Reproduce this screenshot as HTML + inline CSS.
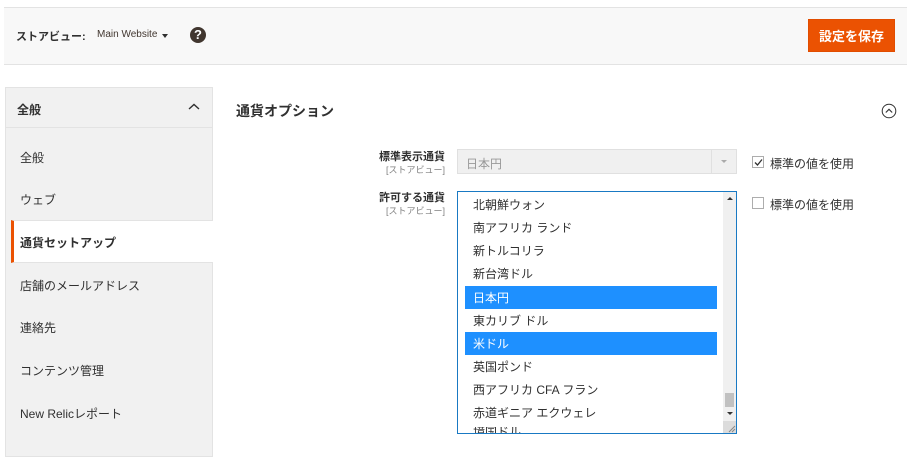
<!DOCTYPE html>
<html><head><meta charset="utf-8"><style>
*{box-sizing:border-box;margin:0;padding:0}
body{width:911px;height:447px;overflow:hidden;background:#fff;font-family:"Liberation Sans","Noto Sans CJK JP",sans-serif;color:#303030;position:relative}
.a{position:absolute}
.topbar{left:4px;top:7px;width:903px;height:58px;background:#f8f8f8;border-top:1px solid #e3e3e3;border-bottom:1px solid #e3e3e3}
.btn{left:808px;top:19px;width:87px;height:33px;background:#eb5202;color:#fff;font-weight:bold;font-size:13px;text-align:center;line-height:33px;border:1px solid #e14d00}
.side{left:5px;top:87px;width:208px;height:370px;background:#f1f1f1;border:1px solid #e3e3e3}
.sh{left:5px;top:87px;width:208px;height:41px;border:1px solid #e3e3e3;font-size:12px;font-weight:bold;padding:13px 0 0 11px}
.it{left:20px;font-size:12px;color:#303030}
.act{left:11px;top:220px;width:202px;height:43px;background:#fff;border-left:3px solid #eb5202;border-top:1px solid #e3e3e3;border-bottom:1px solid #e3e3e3}
.lbl{right:466px;text-align:right;font-size:11px;font-weight:bold;line-height:13px}
.lbl span{display:block;font-weight:normal;font-size:9px;color:#808080}
.opt{left:473px;font-size:12px;color:#303030;line-height:23px}
.hl{left:465px;width:252px;height:23px;background:#1e90ff}
.cb{width:12px;height:12px;border:1px solid #adadad;background:#fff}
.ct{left:770px;font-size:12px}
</style></head><body>
<div class="a topbar"></div>
<div class="a" style="left:16px;top:28px;font-size:11px;font-weight:bold">ストアビュー:</div>
<div class="a" style="left:97px;top:29px;font-size:10px;color:#41362f">Main Website</div>
<div class="a" style="left:162px;top:34px;width:0;height:0;border-left:3px solid transparent;border-right:3px solid transparent;border-top:4px solid #303030"></div>
<div class="a" style="left:190px;top:27px;width:16px;height:16px;border-radius:50%;background:#41362f;color:#fff;font-size:13px;font-weight:bold;text-align:center;line-height:16px">?</div>
<div class="a btn">設定を保存</div>

<div class="a side"></div>
<div class="a sh">全般</div>
<svg class="a" style="left:188px;top:103px" width="12" height="8"><path d="M1 6 L6 1.5 L11 6" stroke="#303030" stroke-width="1.4" fill="none"/></svg>
<div class="a it" style="top:149px">全般</div>
<div class="a it" style="top:191px">ウェブ</div>
<div class="a act"></div>
<div class="a it" style="top:234px;font-weight:bold">通貨セットアップ</div>
<div class="a it" style="top:277px">店舗のメールアドレス</div>
<div class="a it" style="top:319px">連絡先</div>
<div class="a it" style="top:362px">コンテンツ管理</div>
<div class="a it" style="top:405px">New Relicレポート</div>

<div class="a" style="left:236px;top:101px;font-size:14px;font-weight:bold">通貨オプション</div>
<svg class="a" style="left:881px;top:103px" width="16" height="16"><circle cx="8" cy="8" r="6.8" stroke="#303030" stroke-width="1" fill="none"/><path d="M4.8 9.5 L8 6.3 L11.2 9.5" stroke="#303030" stroke-width="1.1" fill="none"/></svg>

<div class="a lbl" style="top:151px">標準表示通貨<span>[ストアビュー]</span></div>
<div class="a lbl" style="top:192px">許可する通貨<span>[ストアビュー]</span></div>

<div class="a" style="left:457px;top:149px;width:280px;height:25px;background:#f0f0f0;border:1px solid #e0e0e0"></div>
<div class="a" style="left:711px;top:150px;width:1px;height:23px;background:#e0e0e0"></div>
<div class="a" style="left:466px;top:155px;font-size:12px;color:#999">日本円</div>
<div class="a" style="left:721px;top:160px;width:0;height:0;border-left:3px solid transparent;border-right:3px solid transparent;border-top:3px solid #aaa"></div>

<div class="a cb" style="left:752px;top:156px"></div>
<svg class="a" style="left:753px;top:157px" width="11" height="11"><path d="M2 5.5 L4.5 8 L9 2.5" stroke="#303030" stroke-width="1.3" fill="none"/></svg>
<div class="a ct" style="top:155px">標準の値を使用</div>
<div class="a cb" style="left:752px;top:197px"></div>
<div class="a ct" style="top:196px">標準の値を使用</div>

<div class="a" style="left:457px;top:191px;width:280px;height:243px;border:1px solid #1979c3;background:#fff;overflow:hidden">
</div>
<div class="a hl" style="top:286px"></div>
<div class="a hl" style="top:332px"></div>
<div class="a opt" style="top:194px">北朝鮮ウォン</div>
<div class="a opt" style="top:217px">南アフリカ ランド</div>
<div class="a opt" style="top:240px">新トルコリラ</div>
<div class="a opt" style="top:263px">新台湾ドル</div>
<div class="a opt" style="top:287px;color:#fff">日本円</div>
<div class="a opt" style="top:310px">東カリブ ドル</div>
<div class="a opt" style="top:333px;color:#fff">米ドル</div>
<div class="a opt" style="top:356px">英国ポンド</div>
<div class="a opt" style="top:379px">西アフリカ CFA フラン</div>
<div class="a opt" style="top:402px">赤道ギニア エクウェレ</div>
<div class="a" style="left:458px;top:427px;width:265px;height:6px;overflow:hidden"><div style="position:absolute;left:15px;top:-4px;font-size:12px">境国ドル</div></div>
<div class="a" style="left:723px;top:192px;width:13px;height:241px;background:#f0f0f0"></div>
<div class="a" style="left:727px;top:197px;width:0;height:0;border-left:3px solid transparent;border-right:3px solid transparent;border-bottom:3px solid #333"></div>
<div class="a" style="left:725px;top:393px;width:9px;height:14px;background:#c1c1c1"></div>
<div class="a" style="left:727px;top:412px;width:0;height:0;border-left:3px solid transparent;border-right:3px solid transparent;border-top:3px solid #333"></div>
<div class="a" style="left:723px;top:421px;width:13px;height:12px;background:#dcdcdc"></div>
<svg class="a" style="left:727px;top:424px" width="9" height="9"><path d="M2 8 L8 2 M5 8 L8 5" stroke="#888" stroke-width="1"/></svg>
</body></html>
